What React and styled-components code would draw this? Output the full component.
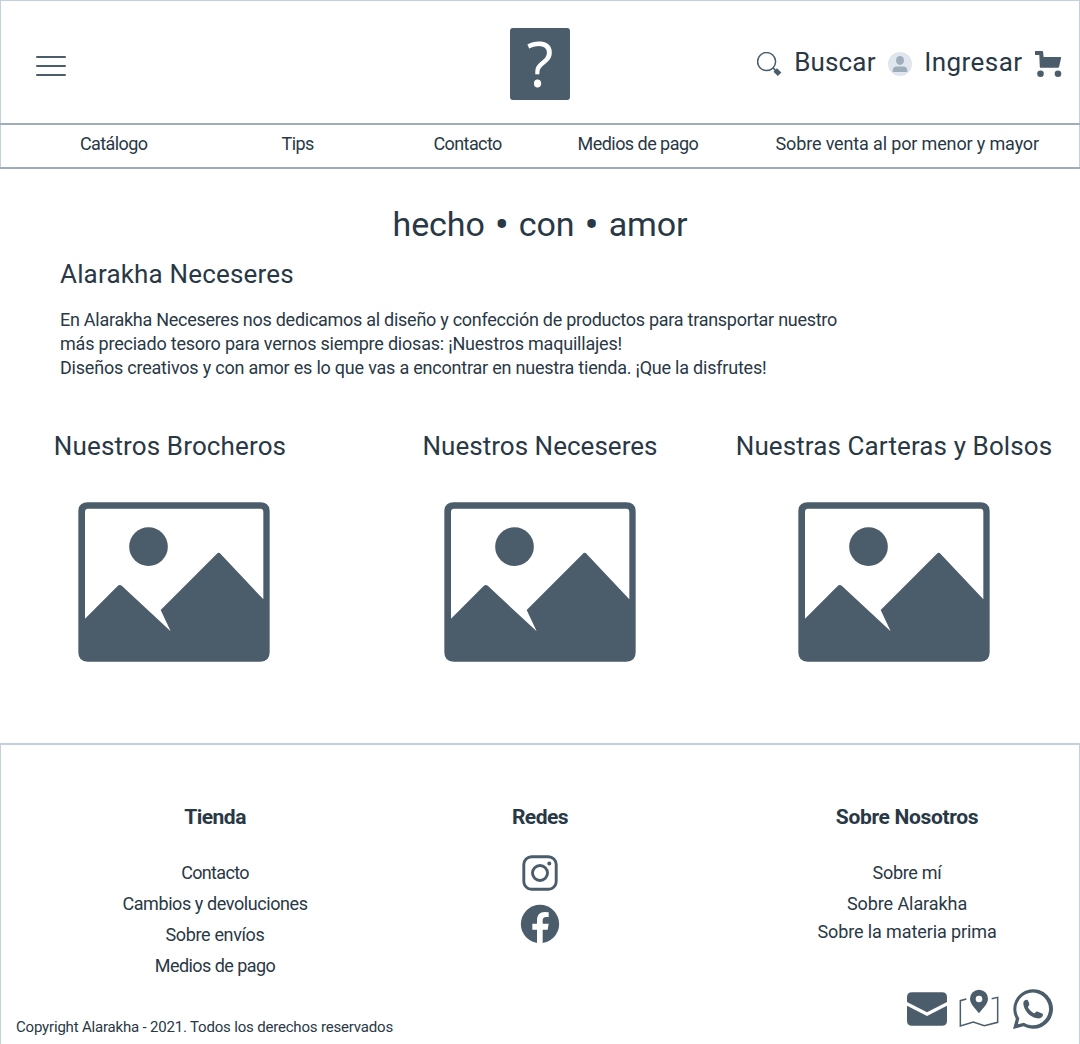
import React from 'react';
import styled, { createGlobalStyle, ThemeProvider } from 'styled-components';

const theme = {
  ink: '#293845',
  icon: '#4b5c6b',
  line: '#9eadba',
  softLine: '#c3cfd9',
  avatar: '#dfe6ed',
};

const GlobalStyle = createGlobalStyle`
  * { box-sizing: border-box; }
  body { margin: 0; background: #fff; overflow: hidden; }
  h1, h2, h3, p, ul { margin: 0; padding: 0; font-weight: 400; }
  ul { list-style: none; }
  a { color: inherit; text-decoration: none; }
  svg { display: block; flex: none; }
`;

const Page = styled.div`
  width: 1080px;
  height: 1044px;
  display: flex;
  flex-direction: column;
  overflow: hidden;
  font-family: Roboto, 'Liberation Sans', sans-serif;
  color: ${(p) => p.theme.ink};
`;

/* Header */
const Header = styled.header`
  height: 123px;
  flex: none;
  display: grid;
  grid-template-columns: 1fr 60px 1fr;
  align-items: start;
  padding: 27px 17px 0 35px;
  border: 1px solid ${(p) => p.theme.softLine};
  border-bottom: 0;
`;

const MenuButton = styled.button`
  width: 30px;
  height: 20px;
  margin-top: 28px;
  padding: 0;
  border: 0;
  background: none;
  display: flex;
  flex-direction: column;
  justify-content: space-between;
`;

const MenuLine = styled.span`
  height: 2px;
  border-radius: 1px;
  background: ${(p) => p.theme.icon};
`;

const Logo = styled.div`
  width: 60px;
  height: 72px;
  margin-left: -9px;
  display: flex;
  align-items: center;
  justify-content: center;
  border-radius: 3px;
  background: ${(p) => p.theme.icon};
  color: #fff;
  font: 400 62.5px/70px 'Open Sans', 'Noto Sans', sans-serif;
  padding-bottom: 2px;
`;

const Actions = styled.div`
  display: flex;
  justify-content: flex-end;
  gap: 12.5px;
  margin-top: 19px;
`;

const Action = styled.a`
  display: flex;
  gap: ${(p) => p.$gap}px;
  font-size: 26px;
  line-height: 30px;
  letter-spacing: ${(p) => p.$track}px;

  svg { margin-top: ${(p) => p.$drop}px; }
`;

/* Navigation */
const Nav = styled.nav`
  height: 46px;
  flex: none;
  border: solid ${(p) => p.theme.line};
  border-width: 2px 0;
`;

const NavList = styled.ul`
  height: 42px;
  display: grid;
  grid-template-columns: 201.5px 152px 144px 198px auto;
  padding: 8px 0 0 79px;
  border: solid ${(p) => p.theme.softLine};
  border-width: 0 1px;
`;

const NavItem = styled.li`
  font-size: 18px;
  line-height: 21px;
  letter-spacing: ${(p) => p.$track}px;
  white-space: nowrap;
`;

/* Main */
const Main = styled.main`
  height: 574px;
  flex: none;
  padding-top: 34px;
`;

const Tagline = styled.h1`
  height: 42px;
  font-size: 34px;
  line-height: 42px;
  letter-spacing: -0.1px;
  word-spacing: 1.7px;
  text-align: center;
`;

const Dot = styled.span`
  font-size: 42px;
  line-height: 0;
  vertical-align: -3px;
`;

const Intro = styled.section`
  padding: 14px 60px 0;
`;

const IntroTitle = styled.h2`
  font-size: 26px;
  line-height: 30px;
  letter-spacing: 0.17px;
`;

const IntroText = styled.p`
  margin-top: 19px;
  font-size: 18px;
  line-height: 24px;
`;

const Line = styled.span`
  display: block;
  letter-spacing: ${(p) => p.$track}px;
`;

const Products = styled.section`
  display: grid;
  grid-template-columns: 348px 384px 324px;
  margin-top: 51px;
`;

const Card = styled.article`
  display: flex;
  flex-direction: column;
  align-items: center;
  gap: 41px;
`;

const CardTitle = styled.h2`
  padding-right: ${(p) => p.$inset || 0}px;
  font-size: 26px;
  line-height: 30px;
  letter-spacing: ${(p) => p.$track}px;
  white-space: nowrap;
`;

/* Footer */
const Footer = styled.footer`
  flex: 1;
  border: 1px solid ${(p) => p.theme.softLine};
  border-top-width: 2px;
  border-bottom: 0;
`;

const Columns = styled.div`
  height: 244px;
  display: grid;
  grid-template-columns: 200px 450px 284px;
  padding: 60px 0 0 114px;
`;

const Column = styled.section`
  display: flex;
  flex-direction: column;
  align-items: center;
`;

const ColumnTitle = styled.h3`
  font-size: 21px;
  font-weight: 700;
  line-height: 24px;
  letter-spacing: ${(p) => p.$track}px;
`;

const Links = styled.ul`
  margin-top: 33px;
  text-align: center;
`;

const LinkItem = styled.li`
  margin-bottom: ${(p) => p.$after ?? 10}px;
  font-size: 18px;
  line-height: 21px;
  letter-spacing: ${(p) => p.$track}px;
`;

const Socials = styled.div`
  display: flex;
  flex-direction: column;
  align-items: center;
  gap: 13px;
  margin-top: 26px;
`;

const Bottom = styled.div`
  display: flex;
  justify-content: space-between;
  padding: 0 26px 0 15px;
`;

const Copyright = styled.p`
  padding-top: 29px;
  font-size: 15px;
  line-height: 18px;
  letter-spacing: -0.185px;
`;

const Channels = styled.div`
  display: flex;
  gap: 12px;
`;

const Fill = styled.svg`
  fill: ${(p) => p.theme.icon};
`;

const Stroke = styled.svg`
  fill: none;
  stroke: ${(p) => p.theme.icon};
`;

const SearchIcon = () => (
  <Stroke width="25" height="25" viewBox="757 52 25 25">
    <circle cx="766.6" cy="61.6" r="9" strokeWidth="1.5" />
    <path d="M773 67.9l3 3" strokeWidth="1.6" />
    <path d="M775.2 69.9l4.4 4.4" strokeWidth="5" />
  </Stroke>
);

const AvatarIcon = () => (
  <svg width="24" height="24" viewBox="0 0 24 24">
    <circle cx="12" cy="12" r="12" fill={theme.avatar} />
    <ellipse cx="12" cy="8.4" rx="4" ry="4.5" fill={theme.line} />
    <path d="M4.7 20v-1.6c0-2.3 1.7-3.8 4-3.8h6.6c2.3 0 4 1.5 4 3.8V20z" fill={theme.line} />
  </svg>
);

const CartIcon = () => (
  <Fill width="27" height="27" viewBox="1035 51 27 27">
    <path d="M1035 51h7.3q.7 0 .8.7l.5 5.3h16.8q.9 0 .7.9l-2 8.8q-.3 1.1-1.3 1.1h-17q-.9 0-1-.9l-.5-11.9H1035z" />
    <circle cx="1040.5" cy="73.8" r="3.3" />
    <circle cx="1058" cy="73.8" r="3.3" />
  </Fill>
);

const PictureIcon = () => (
  <Fill width="192" height="160" viewBox="54 36 576 480">
    <path
      fillRule="evenodd"
      d="M83 37H601Q629 37 629 65V487Q629 515 601 515H83Q55 515 55 487V65Q55 37 83 37ZM84 56Q75 56 75 66V386L173 288Q179 282 186 288L332 424L302 360L470 192Q476 185 482 192L610 328V66Q610 56 601 56Z"
    />
    <circle cx="265.5" cy="170" r="58" />
  </Fill>
);

const InstagramIcon = () => (
  <Stroke width="36" height="36" viewBox="0 0 36 36" strokeWidth="2.9">
    <rect x="1.8" y="1.8" width="32.4" height="32.4" rx="7.8" />
    <circle cx="18" cy="18" r="7.5" />
    <circle cx="27.3" cy="8.6" r="1" strokeWidth="2" />
  </Stroke>
);

const FacebookIcon = () => (
  <svg width="40" height="40" viewBox="90 342 120 120">
    <circle cx="150" cy="402" r="57.5" fill={theme.icon} />
    <path
      fill="#fff"
      d="M141 462V419H127V401H141V391C141 374 150 366 164 366Q170 366 176 367V381H169C161 381 158 385 158 391V401H176L173 419H158V462Z"
    />
  </svg>
);

const MailIcon = () => (
  <Fill width="40" height="40" viewBox="51 57 120 120">
    <path d="M51 96V82Q51 67 66 67H156Q171 67 171 82V96L111 127Z" />
    <path d="M51 107L111 138L171 107V152Q171 167 156 167H66Q51 167 51 152Z" />
  </Fill>
);

const MapIcon = () => (
  <Fill width="42" height="40" viewBox="207 57 126 120">
    <path
      d="M229 87L211 92V168L250 156L283 167L323 157V82L305 86"
      fill="none"
      stroke={theme.icon}
      strokeWidth="4.5"
    />
    <path
      fillRule="evenodd"
      d="M267 130C258 117 240 103 240 86A27 27 0 0 1 294 86C294 103 276 117 267 130ZM267 77A10 10 0 1 0 267 97A10 10 0 1 0 267 77Z"
    />
  </Fill>
);

const WhatsappIcon = () => (
  <Fill width="40" height="40" viewBox="369 57 120 120">
    <path
      fillRule="evenodd"
      d="M369 177L377.5 146A59.5 59.5 0 1 1 400.5 169ZM383.5 162.5L401.5 158A49 49 0 1 0 388 145Z"
    />
    <path d="M400 100C400 93 405 89 410 89C414 89 415 93 417 99C419 104 417 106 414 110C415 117 425 127 434 130C438 124 441 123 446 126C452 129 459 130 459 134C458 142 451 146 442 145C420 143 400 120 400 100Z" />
  </Fill>
);

const navItems = [
  ['Catálogo', -0.6],
  ['Tips', -0.6],
  ['Contacto', -0.6],
  ['Medios de pago', -0.54],
  ['Sobre venta al por menor y mayor', -0.145],
];

const introLines = [
  ['En Alarakha Neceseres nos dedicamos al diseño y confección de productos para transportar nuestro', -0.27],
  ['más preciado tesoro para vernos siempre diosas: ¡Nuestros maquillajes!', -0.207],
  ['Diseños creativos y con amor es lo que vas a encontrar en nuestra tienda. ¡Que la disfrutes!', -0.217],
];

const products = [
  { title: 'Nuestros Brocheros', track: 0.133, inset: 8 },
  { title: 'Nuestros Neceseres', track: 0.021 },
  { title: 'Nuestras Carteras y Bolsos', track: 0.105 },
];

const shopLinks = [
  ['Contacto', -0.66],
  ['Cambios y devoluciones', -0.417],
  ['Sobre envíos', -0.357],
  ['Medios de pago', -0.57],
];

const aboutLinks = [
  ['Sobre mí', -0.3],
  ['Sobre Alarakha', -0.076, 7],
  ['Sobre la materia prima', -0.107],
];

const LinkList = ({ items }) => (
  <Links>
    {items.map(([label, track, after]) => (
      <LinkItem key={label} $track={track} $after={after}>
        <a href="#">{label}</a>
      </LinkItem>
    ))}
  </Links>
);

export default function App() {
  return (
    <ThemeProvider theme={theme}>
      <GlobalStyle />
      <Page>
        <Header>
          <MenuButton aria-label="Menú">
            <MenuLine />
            <MenuLine />
            <MenuLine />
          </MenuButton>
          <Logo>?</Logo>
          <Actions>
            <Action href="#" $gap={12} $track={0.159} $drop={5}>
              <SearchIcon />
              Buscar
            </Action>
            <Action href="#" $gap={12} $track={0.45} $drop={5}>
              <AvatarIcon />
              Ingresar
            </Action>
            <Action href="#" $gap={0} $track={0} $drop={4} aria-label="Carrito">
              <CartIcon />
            </Action>
          </Actions>
        </Header>
        <Nav>
          <NavList>
            {navItems.map(([label, track]) => (
              <NavItem key={label} $track={track}>
                <a href="#">{label}</a>
              </NavItem>
            ))}
          </NavList>
        </Nav>
        <Main>
          <Tagline>
            hecho <Dot>•</Dot> con <Dot>•</Dot> amor
          </Tagline>
          <Intro>
            <IntroTitle>Alarakha Neceseres</IntroTitle>
            <IntroText>
              {introLines.map(([text, track]) => (
                <Line key={text} $track={track}>{text}</Line>
              ))}
            </IntroText>
          </Intro>
          <Products>
            {products.map(({ title, track, inset }) => (
              <Card key={title}>
                <CardTitle $track={track} $inset={inset}>{title}</CardTitle>
                <PictureIcon />
              </Card>
            ))}
          </Products>
        </Main>
        <Footer>
          <Columns>
            <Column>
              <ColumnTitle $track={-0.5}>Tienda</ColumnTitle>
              <LinkList items={shopLinks} />
            </Column>
            <Column>
              <ColumnTitle $track={-0.5}>Redes</ColumnTitle>
              <Socials>
                <InstagramIcon />
                <FacebookIcon />
              </Socials>
            </Column>
            <Column>
              <ColumnTitle $track={-0.34}>Sobre Nosotros</ColumnTitle>
              <LinkList items={aboutLinks} />
            </Column>
          </Columns>
          <Bottom>
            <Copyright>Copyright Alarakha - 2021. Todos los derechos reservados</Copyright>
            <Channels>
              <MailIcon />
              <MapIcon />
              <WhatsappIcon />
            </Channels>
          </Bottom>
        </Footer>
      </Page>
    </ThemeProvider>
  );
}
